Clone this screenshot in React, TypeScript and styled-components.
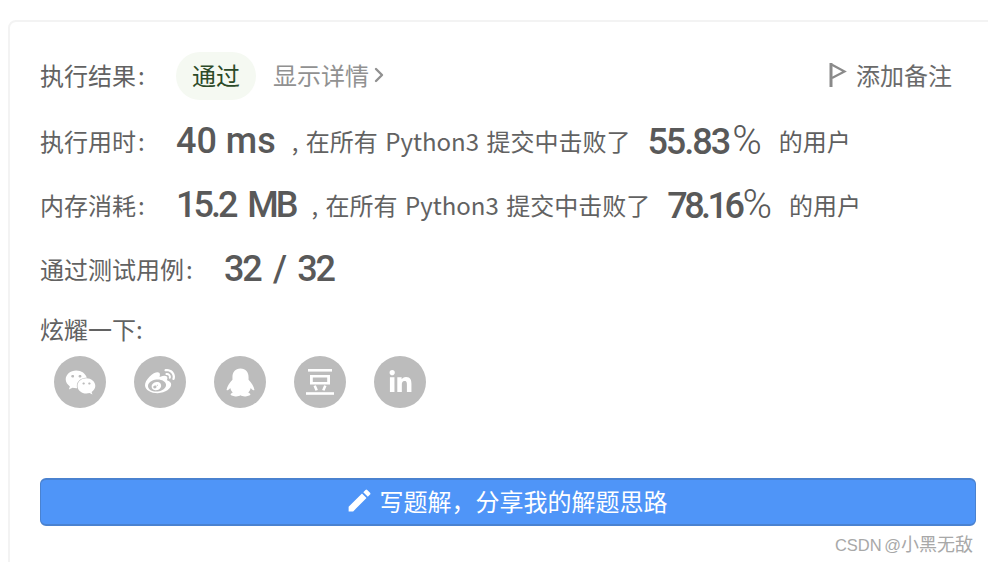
import styled, { createGlobalStyle } from "styled-components";
import { FaWeixin, FaWeibo, FaLinkedinIn } from "react-icons/fa";
import { MdEdit } from "react-icons/md";
import { ChevronRight } from "lucide-react";

const GlobalStyle = createGlobalStyle`
  html, body {
    margin: 0;
    background: #fff;
    font-family: "Noto Sans CJK SC", "Noto Sans", sans-serif;
    color: #5f5f5f;
  }
`;

const Page = styled.div`
  position: relative;
  width: 988px;
  height: 562px;
  overflow: hidden;
  padding-top: 20px;
  box-sizing: border-box;
`;

const Card = styled.div`
  width: 1020px;
  height: 600px;
  margin-left: 8px;
  box-sizing: border-box;
  border: 2px solid #f3f3f3;
  border-radius: 8px;
  padding: 22px 0 0 30px;
`;

const Content = styled.div`
  width: 936px;
`;

const Row = styled.div`
  display: flex;
  align-items: center;
  height: 64px;
  font-size: 24px;
  line-height: 1;
  white-space: pre;
`;

const TopRow = styled(Row)`
  margin-bottom: 1px;
`;

const Label = styled.div<{ $width?: number }>`
  width: ${(p) => p.$width ?? 136}px;
  flex-shrink: 0;
  color: #626262;
`;

const TopLabel = styled(Label)`
  padding-bottom: 2px;
`;

const Colon = styled.span`
  margin-left: 2px;
`;

const Pill = styled.div`
  width: 80px;
  height: 48px;
  padding-bottom: 2px;
  box-sizing: border-box;
  border-radius: 24px;
  background: #f5f9f2;
  color: #2c4a28;
  display: flex;
  align-items: center;
  justify-content: center;
`;

const Details = styled.div`
  display: flex;
  align-items: center;
  margin-left: 17px;
  padding-bottom: 2px;
  color: #919191;
`;

const Chevron = styled(ChevronRight)`
  margin-left: -2px;
`;

const Note = styled.div`
  margin-left: auto;
  margin-right: 24px;
  padding-bottom: 2px;
  display: flex;
  align-items: center;
  gap: 9px;
  color: #6a6a6a;
`;

const Big = styled.span<{ $tracking?: number; $gap?: number }>`
  font-family: Roboto, sans-serif;
  font-size: 36px;
  font-weight: 500;
  letter-spacing: ${(p) => p.$tracking ?? 0}px;
  word-spacing: ${(p) => p.$gap ?? 0}px;
  color: #595959;
`;

const Percent = styled(Big)`
  margin: 0 17px;
`;

const PercentSign = styled.span<{ $gap?: number }>`
  margin-left: ${(p) => p.$gap ?? 3}px;
  font-size: 40px;
  font-weight: 300;
  letter-spacing: 0;
`;

const Muted = styled.span`
  margin-left: 16px;
  word-spacing: 2px;
  color: #626262;
`;

const ShareLabel = styled.div`
  height: 26px;
  margin-top: 14px;
  display: flex;
  align-items: center;
  color: #626262;
  font-size: 24px;
`;

const Socials = styled.div`
  display: flex;
  gap: 28px;
  padding: 15px 0 0 14px;
`;

const Social = styled.div`
  width: 52px;
  height: 52px;
  border-radius: 50%;
  background: #bcbcbc;
  color: #fff;
  display: flex;
  align-items: center;
  justify-content: center;
`;

const WriteButton = styled.button`
  display: flex;
  align-items: center;
  justify-content: center;
  gap: 6px;
  width: 936px;
  height: 48px;
  margin-top: 70px;
  padding: 0 4px 3px 0;
  border: 1px solid #4a82d0;
  border-width: 2px 1px;
  border-radius: 6px;
  background: #4f95f8;
  color: #fff;
  font-family: inherit;
  font-size: 24px;
`;

const Watermark = styled.div`
  position: absolute;
  right: 15px;
  top: 531px;
  font-family: "Noto Sans CJK SC", sans-serif;
  font-size: 18px;
  line-height: 24px;
  color: #a8a8a8;
`;

const WatermarkLatin = styled.span`
  font-family: "Liberation Sans", sans-serif;
  font-size: 16.500px;
  word-spacing: -2px;
`;

const FlagIcon = () => (
  <svg width="18" height="24" viewBox="0 0 18 24" fill="none" stroke="#8a8a8a">
    <path d="M2 0v24" strokeWidth="3" />
    <path d="M3 1.800 15.500 8.500 3 15" strokeWidth="2.200" />
  </svg>
);

const QqIcon = () => (
  <svg width="33" height="29" viewBox="0 0 30 27" fill="#fff">
    <path d="M15 .5C10 .5 7.500 4 7.500 8.500V11C5 13.500 2.500 17 2 20.500c1 .8 2.500-.3 3.500-1.800.3 1.600 1.200 3 2.300 4-1.200.5-2 1.200-2 2 0 1 3 1.800 5.200 1.800 1.800 0 3.200-.4 4-1.100.8.700 2.200 1.100 4 1.100 2.200 0 5.200-.8 5.200-1.800 0-.8-.8-1.500-2-2 1.100-1 2-2.400 2.300-4 1 1.500 2.500 2.600 3.500 1.800C27.500 17 25 13.500 22.500 11V8.500C22.500 4 20 .5 15 .5z" />
  </svg>
);

const DoubanIcon = () => (
  <svg width="28" height="28" viewBox="0 0 28 28" fill="#fff">
    <rect x="2" y="1" width="24" height="2.600" />
    <path d="M4 7h20v9.500H4zM6.800 9.500v4.500h14.400V9.500z" fillRule="evenodd" />
    <path d="M7.500 18l2.400-.7 2 4.700-2.500.8zM20.500 18l-2.400-.7-2 4.700 2.500.8z" />
    <rect x="0" y="24.200" width="28" height="2.600" />
  </svg>
);

export default function App() {
  return (
    <Page>
      <GlobalStyle />
      <Card>
        <Content>
          <TopRow>
            <TopLabel>
              执行结果<Colon>:</Colon>
            </TopLabel>
            <Pill>通过</Pill>
            <Details>
              显示详情
              <Chevron size={24} strokeWidth={2.4} />
            </Details>
            <Note>
              <FlagIcon />
              添加备注
            </Note>
          </TopRow>
          <Row>
            <Label>
              执行用时<Colon>:</Colon>
            </Label>
            <Big>40 ms</Big>
            <Muted>, 在所有 Python3 提交中击败了</Muted>
            <Percent $tracking={-2}>
              55.83<PercentSign>%</PercentSign>
            </Percent>
            <span>的用户</span>
          </Row>
          <Row>
            <Label>
              内存消耗<Colon>:</Colon>
            </Label>
            <Big $tracking={-3} $gap={6}>
              15.2 MB
            </Big>
            <Muted>, 在所有 Python3 提交中击败了</Muted>
            <Percent $tracking={-3.500}>
              78.16<PercentSign $gap={1}>%</PercentSign>
            </Percent>
            <span>的用户</span>
          </Row>
          <Row>
            <Label $width={184}>
              通过测试用例<Colon>:</Colon>
            </Label>
            <Big $tracking={-2.300} $gap={6}>
              32 / 32
            </Big>
          </Row>
          <ShareLabel>炫耀一下:</ShareLabel>
          <Socials>
            <Social>
              <FaWeixin size={31} />
            </Social>
            <Social>
              <FaWeibo size={30} />
            </Social>
            <Social>
              <QqIcon />
            </Social>
            <Social>
              <DoubanIcon />
            </Social>
            <Social>
              <FaLinkedinIn size={25} />
            </Social>
          </Socials>
          <WriteButton>
            <MdEdit size={29} />
            写题解，分享我的解题思路
          </WriteButton>
        </Content>
      </Card>
      <Watermark>
        <WatermarkLatin>CSDN @</WatermarkLatin>小黑无敌
      </Watermark>
    </Page>
  );
}
